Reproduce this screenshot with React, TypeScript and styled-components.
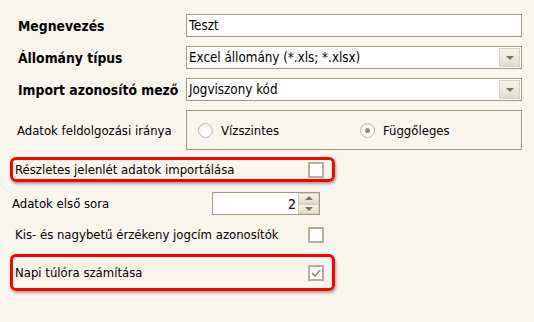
import React from "react";
import styled, { createGlobalStyle } from "styled-components";

const Global = createGlobalStyle`
  html, body { margin: 0; padding: 0; background: #f9f6ee; }
  body {
    font-family: "DejaVu Sans Condensed", "DejaVu Sans", sans-serif;
    font-size: 13px;
    color: #000;
    width: 534px;
    height: 322px;
    overflow: hidden;
  }
`;

const Page = styled.div`
  display: flex;
  flex-direction: column;
  padding-top: 14px;
  width: 534px;
  height: 322px;
  box-sizing: border-box;
`;

const TopRow = styled.div<{ $mt?: number }>`
  display: flex;
  align-items: center;
  height: 23px;
  margin-top: ${(p) => p.$mt ?? 0}px;
`;

const BoldLabel = styled.div`
  width: 186px;
  padding-left: 18px;
  box-sizing: border-box;
  font-weight: bold;
  font-size: 13.8px;
  white-space: nowrap;
`;

const TextField = styled.div`
  width: 336px;
  height: 23px;
  box-sizing: border-box;
  border: 1px solid #a39b7f;
  background: #fff;
  display: flex;
  align-items: center;
  padding-left: 2px;
  font-size: 13.3px;
  white-space: nowrap;
`;

const Select = styled.div`
  width: 336px;
  height: 23px;
  box-sizing: border-box;
  border: 1px solid #a39b7f;
  background: #fff;
  display: flex;
  align-items: stretch;
`;

const SelectText = styled.div`
  flex: 1;
  display: flex;
  align-items: center;
  padding-left: 2px;
  font-size: 13.3px;
  white-space: nowrap;
`;

const DropButton = styled.div`
  width: 21px;
  margin: 1px;
  box-sizing: border-box;
  border: 1px solid #d6d1bf;
  background: linear-gradient(#f6f4ec, #e2ddcb);
  display: flex;
  align-items: center;
  justify-content: center;
`;

const Arrow = styled.div<{ $up?: boolean }>`
  width: 0;
  height: 0;
  border-left: 4px solid transparent;
  border-right: 4px solid transparent;
  ${(p) =>
    p.$up
      ? "border-bottom: 4px solid #7c7563;"
      : "border-top: 4px solid #7c7563;"}
`;

const GroupRow = styled.div`
  display: flex;
  align-items: center;
  margin-top: 9px;
`;

const PlainLabel = styled.div<{ $pl?: number; $w?: number }>`
  padding-left: ${(p) => p.$pl ?? 0}px;
  width: ${(p) => (p.$w ? `${p.$w}px` : "auto")};
  flex: ${(p) => (p.$w ? "none" : "1")};
  box-sizing: border-box;
  white-space: nowrap;
`;

const GroupBox = styled.div`
  width: 336px;
  height: 40px;
  box-sizing: border-box;
  border: 1px solid #a39b7f;
  display: flex;
  align-items: center;
  padding-left: 11px;
`;

const RadioOption = styled.div<{ $w?: number }>`
  display: flex;
  align-items: center;
  gap: 8px;
  width: ${(p) => (p.$w ? `${p.$w}px` : "auto")};
`;

const RadioCircle = styled.div<{ $checked?: boolean }>`
  width: 15px;
  height: 15px;
  box-sizing: border-box;
  border-radius: 50%;
  border: 1px solid #bdb8a6;
  background: radial-gradient(circle at 60% 65%, #ffffff 30%, #ece9e0 100%);
  display: flex;
  align-items: center;
  justify-content: center;
  &::after {
    content: "";
    display: ${(p) => (p.$checked ? "block" : "none")};
    width: 5px;
    height: 5px;
    border-radius: 50%;
    background: #a08c64;
  }
`;

const Lower = styled.div`
  display: flex;
  flex-direction: column;
  margin-top: 7px;
  margin-left: 10px;
  width: 325px;
`;

const Highlight = styled.div<{ $on?: boolean; $h: number; $mt?: number }>`
  height: ${(p) => p.$h}px;
  margin-top: ${(p) => p.$mt ?? 0}px;
  box-sizing: border-box;
  border: 3px solid ${(p) => (p.$on ? "#f00" : "transparent")};
  border-radius: 6px;
  box-shadow: ${(p) => (p.$on ? "1px 2px 3px rgba(0,0,0,0.35)" : "none")};
  display: flex;
  align-items: center;
  padding: 0 8px 0 2px;
`;

const CheckBox = styled.div<{ $checked?: boolean }>`
  width: 16px;
  height: 16px;
  box-sizing: border-box;
  border: 2px solid #b4ae9a;
  background: #fff;
  display: flex;
  align-items: center;
  justify-content: center;
`;

const SpinRow = styled.div`
  display: flex;
  align-items: center;
  height: 23px;
  margin-top: 10px;
`;

const SpinField = styled.div`
  width: 108px;
  height: 23px;
  box-sizing: border-box;
  border: 1px solid #a39b7f;
  background: #fff;
  display: flex;
`;

const SpinValue = styled.div`
  flex: 1;
  display: flex;
  align-items: center;
  justify-content: flex-end;
  padding-right: 2px;
  font-size: 14px;
`;

const SpinButtons = styled.div`
  width: 21px;
  display: flex;
  flex-direction: column;
`;

const SpinButton = styled.div`
  flex: 1;
  box-sizing: border-box;
  border: 1px solid #d6d1bf;
  background: linear-gradient(#f6f4ec, #e2ddcb);
  display: flex;
  align-items: center;
  justify-content: center;
`;

export default function App() {
  return (
    <>
      <Global />
      <Page>
        <TopRow>
          <BoldLabel>Megnevezés</BoldLabel>
          <TextField>Teszt</TextField>
        </TopRow>
        <TopRow $mt={9}>
          <BoldLabel>Állomány típus</BoldLabel>
          <Select>
            <SelectText>Excel állomány (*.xls; *.xlsx)</SelectText>
            <DropButton>
              <Arrow />
            </DropButton>
          </Select>
        </TopRow>
        <TopRow $mt={9}>
          <BoldLabel>Import azonosító mező</BoldLabel>
          <Select>
            <SelectText>Jogviszony kód</SelectText>
            <DropButton>
              <Arrow />
            </DropButton>
          </Select>
        </TopRow>
        <GroupRow>
          <PlainLabel $pl={17} $w={186}>
            Adatok feldolgozási iránya
          </PlainLabel>
          <GroupBox>
            <RadioOption $w={162}>
              <RadioCircle />
              Vízszintes
            </RadioOption>
            <RadioOption>
              <RadioCircle $checked />
              Függőleges
            </RadioOption>
          </GroupBox>
        </GroupRow>
        <Lower>
          <Highlight $on $h={25}>
            <PlainLabel>Részletes jelenlét adatok importálása</PlainLabel>
            <CheckBox />
          </Highlight>
          <SpinRow>
            <PlainLabel $pl={2} $w={202}>
              Adatok első sora
            </PlainLabel>
            <SpinField>
              <SpinValue>2</SpinValue>
              <SpinButtons>
                <SpinButton>
                  <Arrow $up />
                </SpinButton>
                <SpinButton>
                  <Arrow />
                </SpinButton>
              </SpinButtons>
            </SpinField>
          </SpinRow>
          <Highlight $h={25} $mt={7}>
            <PlainLabel>Kis- és nagybetű érzékeny jogcím azonosítók</PlainLabel>
            <CheckBox />
          </Highlight>
          <Highlight $on $h={37} $mt={7}>
            <PlainLabel>Napi túlóra számítása</PlainLabel>
            <CheckBox $checked>
              <svg width="10" height="8" viewBox="0 0 10 8">
                <path d="M1 4 L4 7 L9 1" fill="none" stroke="#9b9787" strokeWidth="1.8" />
              </svg>
            </CheckBox>
          </Highlight>
        </Lower>
      </Page>
    </>
  );
}
